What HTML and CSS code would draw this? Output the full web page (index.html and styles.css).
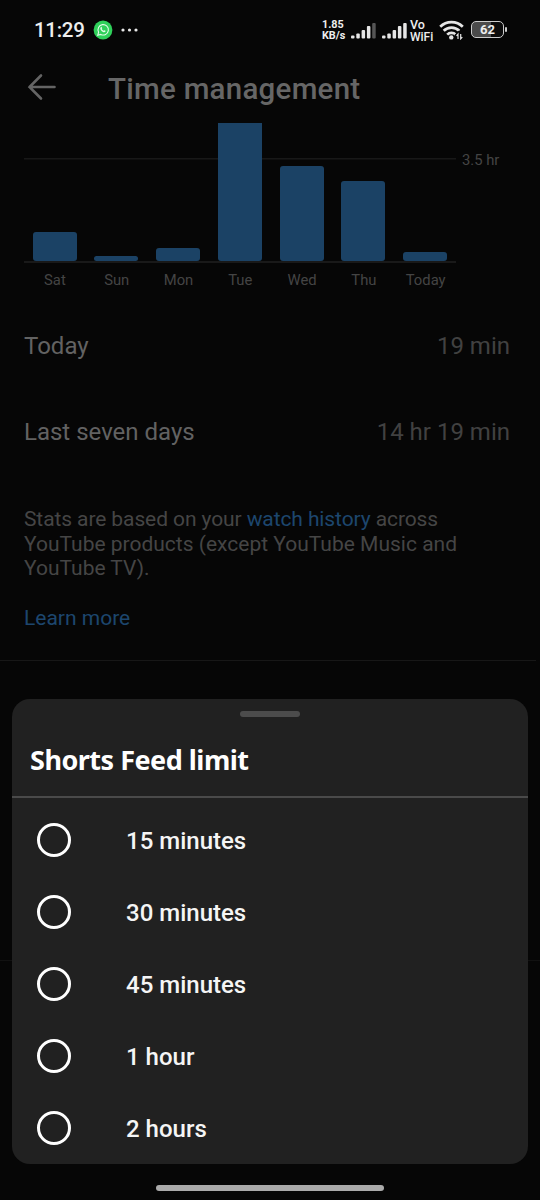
FILE: index.html
```html
<!DOCTYPE html>
<html lang="en">
<head>
<meta charset="utf-8">
<title>Time management</title>
<link rel="stylesheet" href="styles.css">
</head>
<body>
<div class="screen">
  <header class="status">
    <span class="clock">11:29</span>
    <svg class="whatsapp" width="20" height="20" viewBox="0 0 20 20"><circle cx="10" cy="10" r="9.4" fill="#2fd05a"/><path d="M4.7 15.3l.9-3.1a5.2 5.2 0 1 1 2.2 2.2z" fill="none" stroke="#e4fbe9" stroke-width="1.1"/><path d="M7.8 7.2c.4-.6.9-.4 1.100.3l.3.8-.5.7c.5.900 1 1.400 1.900 1.800l.7-.6 1.200.6c.3.700-.4 1.500-1.300 1.500-2 0-4-2.400-3.900-4 0-.4.200-.8.500-1.100z" fill="#e4fbe9"/></svg>
    <svg class="dots" width="18" height="4" viewBox="0 0 18 4" fill="#e8e8e8"><circle cx="2" cy="2" r="1.600"/><circle cx="8.500" cy="2" r="1.600"/><circle cx="15" cy="2" r="1.600"/></svg>
    <div class="rate"><span>1.85</span><span>KB/s</span></div>
    <svg class="signal" width="25" height="17" viewBox="0 0 25 17" fill="#e6e6e6"><rect x="0" y="13.500" width="3.500" height="3" rx="1"/><rect x="5.300" y="11.500" width="3.500" height="5" rx="1"/><rect x="10.600" y="8" width="3.500" height="8.500" rx="1"/><rect x="15.900" y="4" width="3.500" height="12.500" rx="1"/><rect x="21.200" y="1" width="3.500" height="15.500" rx="1" fill="#555"/></svg>
    <svg class="signal second" width="25" height="17" viewBox="0 0 25 17" fill="#e6e6e6"><rect x="0" y="13.500" width="3.500" height="3" rx="1"/><rect x="5.300" y="11.500" width="3.500" height="5" rx="1"/><rect x="10.600" y="8" width="3.500" height="8.500" rx="1"/><rect x="15.900" y="4" width="3.500" height="12.500" rx="1"/><rect x="21.200" y="1" width="3.500" height="15.500" rx="1"/></svg>
    <div class="vowifi"><span class="vo">Vo</span><span>WiFi</span></div>
    <svg class="wifi" width="26" height="20" viewBox="0 0 26 20"><g fill="none" stroke="#e6e6e6" stroke-width="2.700"><path d="M1.200 6.700a16 16 0 0 1 22.600 0"/><path d="M4.700 10.800a11 11 0 0 1 15.600 0"/><path d="M8.200 14.600a6.100 6.100 0 0 1 8.600 0"/></g><circle cx="12.300" cy="17.400" r="2.200" fill="#e6e6e6"/><path d="M18.500 19v-5l-2 2M21.500 14v5l2.200-2.200" stroke="#060606" stroke-width="3" fill="none"/><path d="M19 19v-4.800l-1.500 1.700M21.700 14v4.800l1.600-1.700" stroke="#e6e6e6" stroke-width="1.200" fill="none"/></svg>
    <div class="battery"><span class="level">62</span></div>
  </header>

  <div class="appbar">
    <svg width="30" height="28" viewBox="0 0 30 28" fill="none" stroke="#646464" stroke-width="2.600" stroke-linecap="round"><path d="M27.500 14H2.500M14 2.500L2.500 14 14 25.500"/></svg>
    <h1>Time management</h1>
  </div>

  <section class="chart">
    <div class="plot">
      <div class="slot"><i class="bar" style="height:29px"></i></div>
      <div class="slot"><i class="bar" style="height:5px"></i></div>
      <div class="slot"><i class="bar" style="height:13px"></i></div>
      <div class="slot"><i class="bar cut" style="height:138px"></i></div>
      <div class="slot"><i class="bar" style="height:95px"></i></div>
      <div class="slot"><i class="bar" style="height:80px"></i></div>
      <div class="slot"><i class="bar" style="height:9px"></i></div>
    </div>
    <span class="scale">3.5 hr</span>
    <div class="days"><span>Sat</span><span>Sun</span><span>Mon</span><span>Tue</span><span>Wed</span><span>Thu</span><span>Today</span></div>
  </section>

  <section class="totals">
    <div class="row"><span>Today</span><span class="value">19 min</span></div>
    <div class="row"><span>Last seven days</span><span class="value">14 hr 19 min</span></div>
  </section>

  <section class="note">
    <p><span class="lead">Stats are based on your <a>watch history</a> across</span><br>YouTube products (except YouTube Music and<br>YouTube TV).</p>
    <a class="more">Learn more</a>
  </section>
  <div class="group"></div>

  <div class="sheet">
    <div class="grip"></div>
    <h2>Shorts Feed limit</h2>
    <div class="options">
      <label class="option"><span class="radio"></span><span class="label">15 minutes</span></label>
      <label class="option"><span class="radio"></span><span class="label">30 minutes</span></label>
      <label class="option"><span class="radio"></span><span class="label">45 minutes</span></label>
      <label class="option"><span class="radio"></span><span class="label">1 hour</span></label>
      <label class="option"><span class="radio"></span><span class="label">2 hours</span></label>
    </div>
  </div>
  <div class="home"></div>
</div>
</body>
</html>
```
FILE: styles.css
```css
* { box-sizing: border-box; }
body { margin: 0; background: #060606; font-family: Roboto, sans-serif; }
.screen { position: relative; width: 540px; height: 1200px; overflow: hidden; background: #060606; display: flex; flex-direction: column; }

.status { height: 60px; display: flex; align-items: center; padding-left: 34px; color: #eee; flex: none; }
.clock { width: 59px; font-size: 20.500px; font-weight: 500; letter-spacing: -.3px; }
.whatsapp { margin-right: 8px; }
.dots { margin-right: 183px; }
.rate { width: 24px; flex: none; display: flex; flex-direction: column; font-size: 10.800px; line-height: 11px; font-weight: 700; margin-right: 5px; white-space: nowrap; }
.signal { flex: none; margin-right: 6px; }
.second { margin-right: 3px; }
.vowifi { width: 25px; flex: none; display: flex; flex-direction: column; font-size: 12px; line-height: 12px; font-weight: 500; margin-right: 4px; white-space: nowrap; }
.vo { font-size: 12.500px; line-height: 13px; }
.wifi { flex: none; margin-right: 6px; }
.battery { flex: none; width: 33px; height: 17px; margin-top: -1px; border: 1.500px solid #ccc; border-radius: 5px; background: linear-gradient(90deg, #4b4b4b 60%, #0c0c0c 60%); position: relative; }
.battery::after { content: ""; position: absolute; right: -4px; top: 5px; width: 2px; height: 5px; background: #ccc; border-radius: 1px; }
.level { display: block; text-align: center; font-size: 13px; font-weight: 700; line-height: 15px; }

.appbar { height: 63px; flex: none; display: flex; align-items: center; padding: 0 0 10px 27px; }
h1 { margin: 4px 0 0 51px; font-size: 29.500px; line-height: 34px; font-weight: 500; letter-spacing: .26px; color: #666; white-space: nowrap; }

.chart { height: 177px; flex: none; display: grid; grid-template-columns: 432px auto; grid-template-rows: 140px 37px; padding-left: 24px; }
.plot { display: grid; grid-template-columns: repeat(7, 61.800px); align-items: end; border-bottom: 2px solid #191919; background: linear-gradient(#181818, #181818) 0 35px / 100% 1.500px no-repeat; }
.slot { height: 138px; display: flex; align-items: flex-end; padding-left: 8.500px; }
.bar { width: 44px; background: #1b4265; border-radius: 3px; }
.cut { border-radius: 0 0 3px 3px; }
.scale { font-size: 14.800px; line-height: 18px; padding: 28px 0 0 6px; color: #444; }
.days { display: grid; grid-template-columns: repeat(7, 61.800px); font-size: 14.800px; line-height: 18px; padding-top: 8px; color: #444; text-align: center; }

.totals { flex: none; }
.row { height: 86px; padding: 31px 30px 0 24px; display: flex; justify-content: space-between; font-size: 24px; line-height: 30px; color: #626262; }
.value { color: #414141; }

.note { flex: none; height: 189px; padding: 35px 0 0 24px; font-size: 21px; line-height: 24.700px; color: #454545; border-bottom: 1px solid #171717; width: 536px; }
.note p { margin: 0 0 25px; white-space: nowrap; }
.lead { letter-spacing: -.1px; }
.note a { color: #1d466e; }
.group { height: 300px; flex: none; border-bottom: 1px solid #111; }

.sheet { position: absolute; left: 12px; top: 699px; width: 516px; height: 465px; background: #212121; border-radius: 18px; overflow: hidden; display: flex; flex-direction: column; }
.grip { width: 60px; height: 6px; margin: 12px auto 0; background: #4c4c4c; border-radius: 3px; flex: none; }
h2 { margin: 0; height: 81px; flex: none; padding: 24px 0 0 18px; border-bottom: 2px solid #4a4a4a; font: 700 27px/38px "Noto Sans", sans-serif; letter-spacing: -.5px; color: #fff; white-space: nowrap; }
.options { padding-top: 6px; }
.option { height: 72px; display: flex; align-items: center; padding-left: 25px; color: #f5f5f5; font-size: 24px; line-height: 30px; font-weight: 500; }
.label { padding-top: 2px; }
.radio { width: 34px; height: 34px; margin-right: 55px; border: 3px solid #fff; border-radius: 50%; }
.home { position: absolute; left: 156px; top: 1185px; width: 228px; height: 6px; border-radius: 3px; background: #aaa; }
```
